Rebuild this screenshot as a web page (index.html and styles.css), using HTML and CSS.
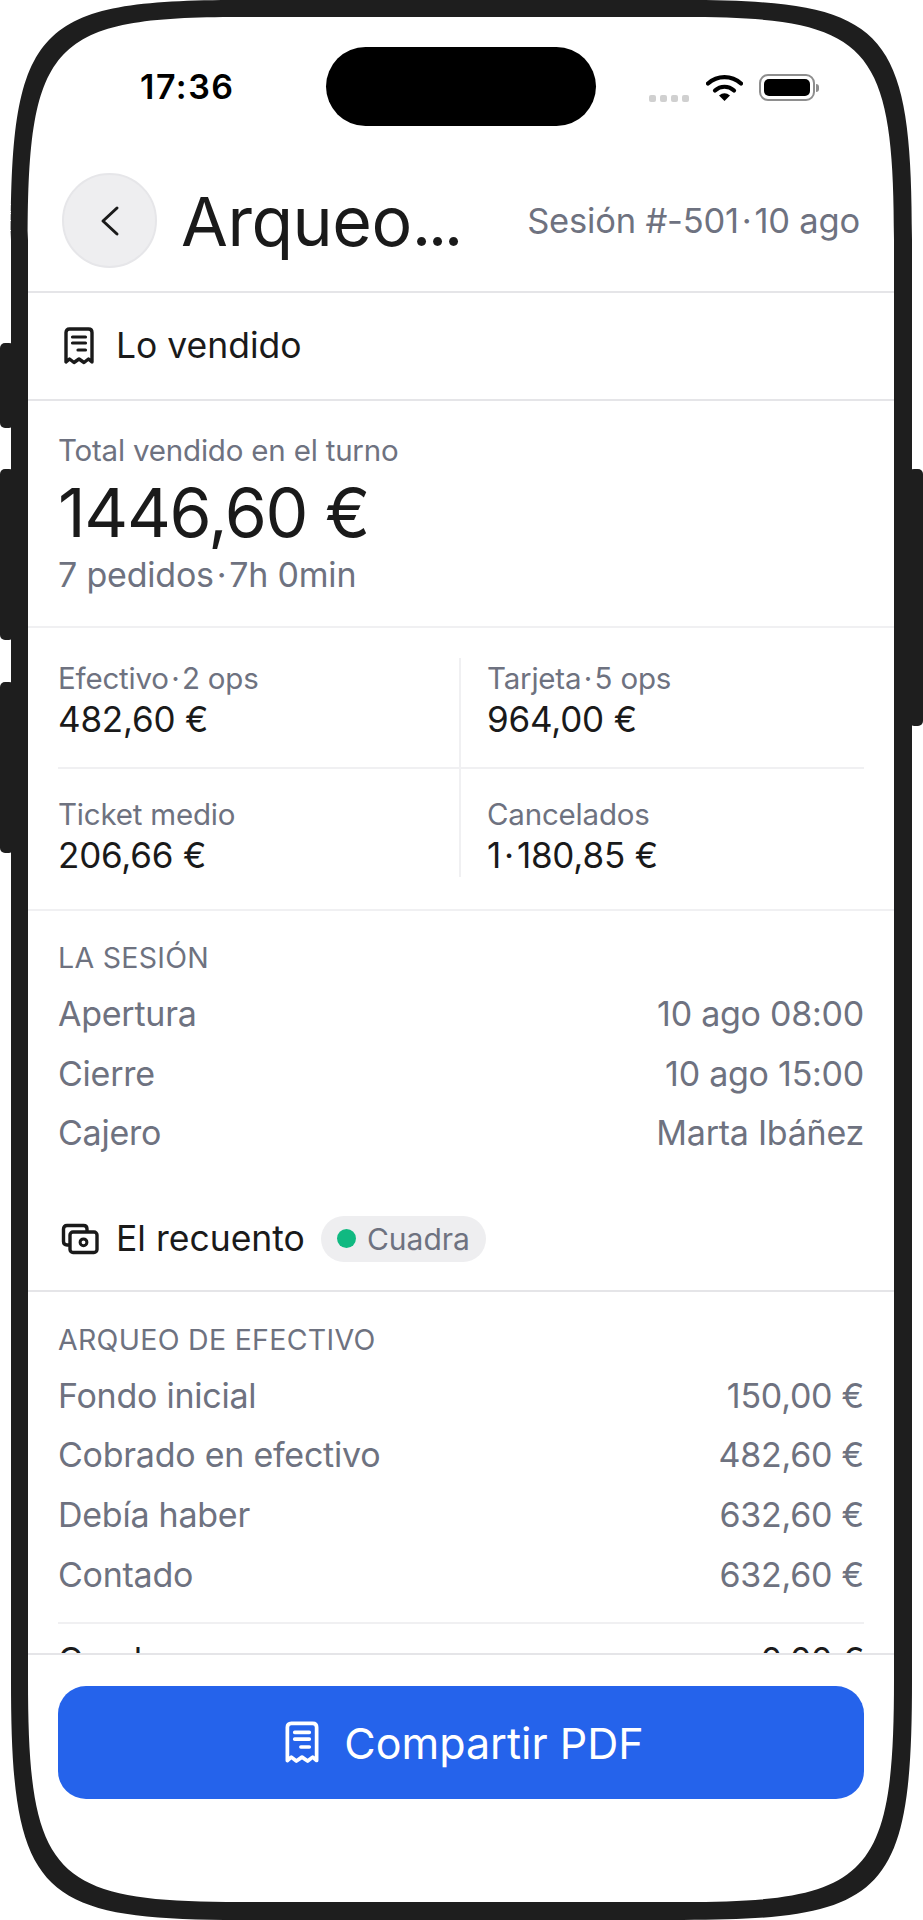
FILE: index.html
```html
<!DOCTYPE html>
<html lang="es">
<head>
    <meta charset="UTF-8">
    <meta name="viewport" content="width=device-width, initial-scale=1.0">
    <title>Arqueo de caja</title>
    <link rel="stylesheet" href="styles.css">
</head>
<body>
    <div class="phone">
        <span class="side-btn side-mute"></span>
        <span class="side-btn side-up"></span>
        <span class="side-btn side-down"></span>
        <span class="side-btn side-power"></span>

        <div class="screen">
            <div class="status-bar">
                <span class="clock">17:36</span>
                <span class="island"></span>
                <div class="status-icons">
                    <span class="signal"><i></i><i></i><i></i><i></i></span>
                    <svg class="wifi" viewBox="0 0 37 27">
                        <path d="M2 9.500C11.500 1 25.500 1 35 9.500" fill="none" stroke="#000" stroke-width="4.200" stroke-linecap="round"/>
                        <path d="M9 16.500C14.500 11.500 22.500 11.500 28 16.500" fill="none" stroke="#000" stroke-width="4.200" stroke-linecap="round"/>
                        <path d="M13 21.500Q18.500 17 24 21.500L18.500 27Z" fill="#000"/>
                    </svg>
                    <span class="battery"><span class="battery-fill"></span></span>
                    <span class="battery-nub"></span>
                </div>
            </div>

            <header class="top-bar">
                <button class="back-btn" type="button">
                    <svg viewBox="0 0 24 32" width="24" height="32"><path d="M19 3L5 16L19 29" fill="none" stroke="#1a1a1a" stroke-width="3" stroke-linecap="round" stroke-linejoin="round"/></svg>
                </button>
                <h1 class="page-title">Arqueo<span class="title-dots">...</span></h1>
                <span class="page-sub">Sesión #-501&#8202;·&#8202;10 ago</span>
            </header>

            <main class="content">
                <div class="section-head section-head-first">
                    <svg class="head-icon" viewBox="0 0 32 38"><path d="M3 35V5.500Q3 2 6.500 2H25.500Q29 2 29 5.500V35L25.500 32L21 35.500L16 32L11 35.500L6.500 32Z" fill="none" stroke="#1a1a1a" stroke-width="3.400" stroke-linejoin="round"/><path d="M9.500 10H22.500M9.500 16H22.500M15 23H22.500" stroke="#1a1a1a" stroke-width="3.200" stroke-linecap="round"/></svg>
                    <span>Lo vendido</span>
                </div>

                <section class="total">
                    <div class="total-label">Total vendido en el turno</div>
                    <div class="total-amount">1446,60 €</div>
                    <div class="total-meta">7 pedidos&#8202;·&#8202;7h 0min</div>
                </section>

                <section class="stats">
                    <div class="stat stat-left">
                        <div class="stat-label">Efectivo&#8202;·&#8202;2 ops</div>
                        <div class="stat-value">482,60 €</div>
                    </div>
                    <div class="stat stat-right">
                        <div class="stat-label">Tarjeta&#8202;·&#8202;5 ops</div>
                        <div class="stat-value">964,00 €</div>
                    </div>
                    <div class="stat stat-left stat-low">
                        <div class="stat-label">Ticket medio</div>
                        <div class="stat-value">206,66 €</div>
                    </div>
                    <div class="stat stat-right stat-low">
                        <div class="stat-label">Cancelados</div>
                        <div class="stat-value">1&#8202;·&#8202;180,85 €</div>
                    </div>
                </section>

                <section class="block">
                    <div class="block-label">LA SESIÓN</div>
                    <div class="row"><span>Apertura</span><span>10 ago 08:00</span></div>
                    <div class="row"><span>Cierre</span><span>10 ago 15:00</span></div>
                    <div class="row"><span>Cajero</span><span>Marta Ibáñez</span></div>
                </section>

                <div class="section-head section-head-count">
                    <svg class="head-icon-wide" viewBox="0 0 38 32"><path d="M8 22H6Q2.500 22 2.500 18.500V6Q2.500 2.500 6 2.500H22.500Q26 2.500 26 6V8" fill="none" stroke="#1a1a1a" stroke-width="3.400"/><rect x="9" y="9" width="27" height="20.500" rx="3" fill="none" stroke="#1a1a1a" stroke-width="3.400"/><circle cx="22.500" cy="19.300" r="3.400" fill="none" stroke="#1a1a1a" stroke-width="3"/></svg>
                    <span>El recuento</span>
                    <span class="pill"><i class="pill-dot"></i>Cuadra</span>
                </div>

                <section class="block block-count">
                    <div class="block-label">ARQUEO DE EFECTIVO</div>
                    <div class="row"><span>Fondo inicial</span><span>150,00 €</span></div>
                    <div class="row"><span>Cobrado en efectivo</span><span>482,60 €</span></div>
                    <div class="row"><span>Debía haber</span><span>632,60 €</span></div>
                    <div class="row"><span>Contado</span><span>632,60 €</span></div>
                    <div class="row row-total"><span>Cuadre</span><span>0,00 €</span></div>
                </section>
            </main>

            <footer class="bottom-bar">
                <button class="share-btn" type="button">
                    <svg class="share-icon" viewBox="0 0 32 38"><path d="M3 35V5.500Q3 2 6.500 2H25.500Q29 2 29 5.500V35L25.500 32L21 35.500L16 32L11 35.500L6.500 32Z" fill="none" stroke="#fff" stroke-width="3.300" stroke-linejoin="round"/><path d="M9.500 10H22.500M9.500 16H22.500M15 23H22.500" stroke="#fff" stroke-width="3.200" stroke-linecap="round"/></svg>
                    Compartir PDF
                </button>
            </footer>
        </div>

        <svg class="bezel" viewBox="0 0 923 1920">
            <path fill-rule="evenodd" d="M11 240C11 26 37 0 240 0H683C886 0 912 26 912 240V1680C912 1894 886 1920 683 1920H240C37 1920 11 1894 11 1680ZM28 240C28 42 53 17 240 17H683C869 17 894 42 894 240V1680C894 1877 869 1902 683 1902H240C53 1902 28 1877 28 1680Z"/>
        </svg>
    </div>
</body>
</html>
```

FILE: styles.css
```css
* {
    box-sizing: border-box;
}
body {
    margin: 0;
    height: 1920px;
    overflow: hidden;
    background: #fff;
    font-family: 'Inter', 'Liberation Sans', sans-serif;
    color: #1a1a1a;
}
.phone {
    position: relative;
    height: 1920px;
    padding: 17px 29px 18px 28px;
}
.bezel {
    position: absolute;
    left: 0;
    top: 0;
    width: 923px;
    height: 1920px;
    fill: #1e1e1e;
}
.side-btn {
    position: absolute;
    width: 14px;
    background: #1e1e1e;
    border-radius: 5px;
}
.side-mute { left: 0; top: 343px; height: 85px; }
.side-up { left: 0; top: 469px; height: 171px; }
.side-down { left: 0; top: 682px; height: 171px; }
.side-power { right: 0; top: 469px; height: 257px; }
.screen {
    height: 100%;
    background: #fff;
    overflow: hidden;
    display: flex;
    flex-direction: column;
}
.status-bar {
    display: flex;
    align-items: flex-start;
    height: 130px;
    padding: 30px 0 0 112px;
}
.clock {
    width: 186px;
    margin-top: 20px;
    font-size: 34px;
    line-height: 40px;
    font-weight: 600;
    letter-spacing: 1.500px;
    color: #000;
}
.island {
    width: 270px;
    height: 79px;
    background: #000;
    border-radius: 40px;
}
.status-icons {
    display: flex;
    align-items: center;
    margin: 26px 0 0 53px;
}
.signal {
    display: flex;
    gap: 4px;
    margin-top: 22px;
}
.signal i {
    width: 7px;
    height: 7px;
    border-radius: 2px;
    background: #d0d0d0;
}
.wifi {
    width: 37px;
    height: 27px;
    margin-left: 17px;
}
.battery {
    width: 56px;
    height: 27px;
    margin-left: 16px;
    border: 2px solid #8e8e8e;
    border-radius: 9px;
    padding: 3px;
}
.battery-fill {
    display: block;
    height: 100%;
    background: #000;
    border-radius: 5px;
}
.battery-nub {
    width: 3px;
    height: 8px;
    margin-left: 1px;
    background: #8e8e8e;
    border-radius: 0 3px 3px 0;
}
.top-bar {
    display: flex;
    align-items: center;
    height: 146px;
    padding: 3px 34px 0 34px;
    border-bottom: 2px solid #e5e5e8;
}
.back-btn {
    width: 95px;
    height: 95px;
    display: flex;
    align-items: center;
    justify-content: center;
    padding: 0;
    background: #eeeef0;
    border: 2px solid #e6e6e9;
    border-radius: 50%;
}
.page-title {
    margin: 0 0 0 24px;
    font-size: 68px;
    line-height: 80px;
    font-weight: 400;
    letter-spacing: -0.5px;
}
.title-dots {
    letter-spacing: -3.500px;
}
.page-sub {
    margin-left: auto;
    font-size: 34.500px;
    letter-spacing: -0.2px;
    color: #6e7280;
}
.content {
    flex: 1;
    min-height: 0;
    overflow: hidden;
}
.section-head {
    display: flex;
    align-items: center;
    font-size: 35.500px;
    line-height: 44px;
}
.section-head-first {
    height: 108px;
    padding-left: 35px;
    border-bottom: 2px solid #e5e5e8;
}
.head-icon {
    width: 32px;
    height: 38px;
    margin-right: 21px;
}
.head-icon-wide {
    width: 38px;
    height: 32px;
    margin-right: 17px;
}
.section-head-count {
    height: 121px;
    padding: 46px 0 29px 33px;
    border-bottom: 2px solid #e5e5e8;
}
.pill {
    display: flex;
    align-items: center;
    height: 46px;
    margin-left: 16px;
    padding: 0 16px;
    background: #eeeef0;
    border-radius: 23px;
    font-size: 30px;
    color: #6e7280;
}
.pill-dot {
    width: 19px;
    height: 19px;
    margin-right: 11px;
    background: #10b981;
    border-radius: 50%;
}
.total {
    padding: 31px 30px 30px;
    border-bottom: 2px solid #f0f0f2;
}
.total-label {
    font-size: 29.500px;
    line-height: 36px;
    letter-spacing: -0.2px;
    color: #6e7280;
}
.total-amount {
    margin-top: 4px;
    font-size: 68px;
    line-height: 80px;
    letter-spacing: -1.300px;
}
.total-meta {
    margin-top: 2px;
    font-size: 34px;
    line-height: 42px;
    letter-spacing: -0.2px;
    color: #6e7280;
}
.stats {
    display: grid;
    grid-template-columns: 403px 403px;
    padding: 30px 30px 32px;
    border-bottom: 2px solid #f0f0f2;
}
.stat {
    padding: 2px 0 26px;
}
.stat-left {
    border-right: 2px solid #f0f0f2;
}
.stat-right {
    padding-left: 26px;
}
.stat-low {
    padding: 27px 0 0;
    border-top: 2px solid #f0f0f2;
}
.stat-low.stat-right {
    padding-left: 26px;
}
.stat-label {
    font-size: 29.500px;
    line-height: 36px;
    letter-spacing: -0.2px;
    color: #6e7280;
}
.stat-value {
    margin-top: 1px;
    font-size: 35px;
    line-height: 44px;
    letter-spacing: -0.2px;
}
.block {
    padding: 31px 30px 0;
}
.block-count {
    padding-top: 32px;
}
.block-label {
    margin-bottom: 18px;
    font-size: 28.500px;
    line-height: 32px;
    letter-spacing: 0.3px;
    color: #6e7280;
}
.row {
    display: flex;
    justify-content: space-between;
    margin-bottom: 15.600px;
    font-size: 34px;
    line-height: 44px;
    letter-spacing: -0.25px;
    color: #6e7280;
}
.row-total {
    margin-top: 25px;
    padding-top: 14px;
    border-top: 2px solid #f0f0f2;
    color: #1a1a1a;
}
.bottom-bar {
    height: 249px;
    padding: 31px 30px 0;
    border-top: 2px solid #e5e5e8;
}
.share-btn {
    width: 100%;
    height: 113px;
    display: flex;
    align-items: center;
    justify-content: center;
    gap: 24px;
    padding: 0 0 0 6px;
    background: #2563eb;
    border: none;
    border-radius: 28px;
    font-family: inherit;
    font-size: 43px;
    color: #fff;
}
.share-icon {
    width: 36px;
    height: 43px;
}
```
